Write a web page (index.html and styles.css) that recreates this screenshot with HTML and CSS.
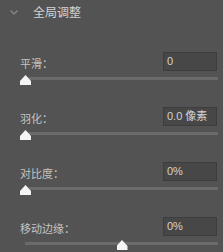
FILE: index.html
```html
<!DOCTYPE html>
<html lang="zh">
<head>
<meta charset="utf-8">
<link rel="stylesheet" href="styles.css">
</head>
<body>
<div class="panel">
  <div class="header">
    <svg class="chevron" width="8" height="5" viewBox="0 0 8 5"><polyline points="0.5,0.5 4,4 7.5,0.5" fill="none" stroke="#8a8a8a" stroke-width="1.2"/></svg>
    <span class="title">全局调整</span>
  </div>
  <div class="rows">
    <div class="row">
      <div class="field"><span class="label">平滑：</span><div class="input">0</div></div>
      <div class="track"><span class="thumb" style="left:calc(0% - 5px)"></span></div>
    </div>
    <div class="row">
      <div class="field"><span class="label">羽化：</span><div class="input">0.0 像素</div></div>
      <div class="track"><span class="thumb" style="left:calc(0% - 5px)"></span></div>
    </div>
    <div class="row">
      <div class="field"><span class="label">对比度：</span><div class="input">0%</div></div>
      <div class="track"><span class="thumb" style="left:calc(0% - 5px)"></span></div>
    </div>
    <div class="row">
      <div class="field"><span class="label">移动边缘：</span><div class="input">0%</div></div>
      <div class="track"><span class="thumb" style="left:calc(50% - 5px)"></span></div>
    </div>
  </div>
</div>
</body>
</html>
```
FILE: styles.css
```css
html, body {
  margin: 0;
  padding: 0;
  background: #535353;
  width: 223px;
  height: 252px;
  overflow: hidden;
}
.panel {
  font-family: "Noto Sans CJK SC", "Liberation Sans", sans-serif;
}
.header {
  height: 24px;
  display: flex;
  align-items: center;
  padding-left: 10px;
}
.chevron {
  display: block;
  margin-right: 15px;
}
.title {
  font-size: 12px;
  color: #d2d2d2;
  line-height: 14px;
}
.rows {
  padding: 28px 5px 0 20px;
  display: flex;
  flex-direction: column;
  gap: 27px;
}
.row {
  display: flex;
  flex-direction: column;
  gap: 6px;
}
.field {
  display: flex;
  justify-content: space-between;
  align-items: center;
  height: 19px;
}
.label {
  font-size: 11px;
  color: #c4c4c4;
  line-height: 12px;
  padding-top: 3px;
}
.input {
  box-sizing: border-box;
  width: 54px;
  height: 19px;
  margin-right: 1px;
  background: #474747;
  border: 1px solid #3d3d3d;
  color: #d4d4d4;
  font-family: "Liberation Sans", "Noto Sans CJK SC", sans-serif;
  font-size: 11px;
  line-height: 17px;
  padding-left: 3px;
}
.track {
  position: relative;
  height: 3px;
  margin-left: 5px;
  background: #6b6b6b;
}
.thumb {
  position: absolute;
  top: -2px;
  width: 11px;
  height: 10px;
  background: #f4f4f4;
  clip-path: polygon(50% 0, 100% 60%, 100% 100%, 0 100%, 0 60%);
}
```
